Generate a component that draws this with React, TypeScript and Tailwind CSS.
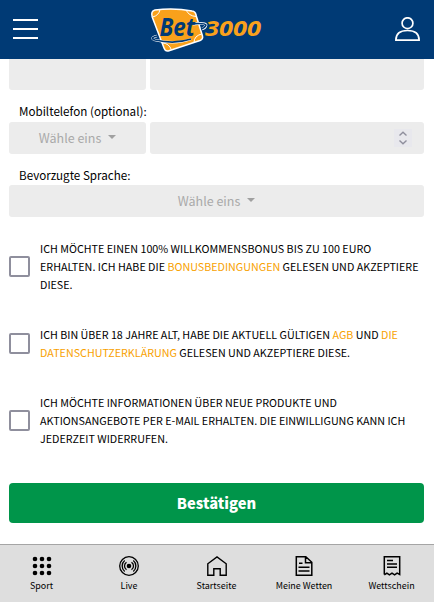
import type { ReactNode } from 'react';

function Logo() {
  return (
    <svg width="114" height="47" viewBox="0 0 114 47" className="ml-[112px] mr-auto block">
      <path
        d="M5 4 Q24 1.500 42 5 Q45.500 5.500 46 9 L52.500 30 Q53.300 33 50 34.500 L19 44.800 Q15.500 46 14 42 L2.200 11 Q.5 5 5 4Z"
        fill="#f9a11b"
        stroke="#fff"
        strokeWidth="1.500"
      />
      <g fill="none" stroke="#fff" strokeWidth="1">
        <path d="M10 3.500Q9 9.500 2.500 11" />
        <path d="M36 4Q39 10 46 10.500" />
        <path d="M51.500 28Q44 30 44 36.500" />
        <path d="M12 37Q19 37 21.500 44" />
      </g>
      <path d="M7 30Q-1 32 5 34Q25 39 41 33" fill="none" stroke="#fff" strokeWidth="2.400" />
      <path d="M7 30Q-1 32 5 34Q25 38.500 41 33" fill="none" stroke="#003a75" strokeWidth="1.700" />
      <path d="M43 18Q55 16.500 56 19Q55.500 22 52 23" fill="none" stroke="#fff" strokeWidth="2.800" />
      <path d="M39 18Q55 16.500 56 19Q55 22 51 23" fill="none" stroke="#003a75" strokeWidth="1.600" />
      <text
        x="9.500"
        y="30"
        textLength="35.500"
        lengthAdjust="spacingAndGlyphs"
        className="fill-[#003a75] font-['Open_Sans',sans-serif] text-[25px] font-bold italic"
      >
        Bet
      </text>
      <text
        x="55"
        y="30"
        textLength="56"
        lengthAdjust="spacingAndGlyphs"
        className="fill-[#f9a11b] font-['Open_Sans',sans-serif] text-[22px] font-bold italic"
      >
        3000
      </text>
    </svg>
  );
}

function Header() {
  return (
    <header className="flex h-[59px] shrink-0 items-center bg-[#003a75] pl-[13px] pr-[14px]">
      <button aria-label="Menü" className="-mt-px flex w-[25px] flex-col gap-[7px]">
        <span className="h-0.5 bg-white" />
        <span className="h-0.5 bg-white" />
        <span className="h-0.5 bg-white" />
      </button>
      <Logo />
      <button aria-label="Konto" className="-mt-px">
        <svg width="25" height="24" viewBox="0 0 25 24" fill="none" stroke="#fff" strokeWidth="1.700">
          <circle cx="12.500" cy="6.200" r="5.400" />
          <path d="M.9 23.100C.9 17 5 13.500 12.500 13.500S24.100 17 24.100 23.100Z" />
        </svg>
      </button>
    </header>
  );
}

function Select({ className }: { className: string }) {
  return (
    <button
      className={`flex h-8 items-center justify-center gap-[7px] rounded-[3px] bg-[#ececec] text-[12.500px] text-[#a9a9a9] ${className}`}
    >
      <span>Wähle eins</span>
      <span className="-mt-[3px] border-x-4 border-t-4 border-x-transparent border-t-[#a0a0a0]" />
    </button>
  );
}

function Stepper() {
  return (
    <svg width="18" height="18" viewBox="0 0 18 18" className="bg-[#e8e8ed]">
      <path d="M5.500 6.500 9 3.200l3.500 3.300M5.500 11.500 9 14.800l3.500-3.300" fill="none" stroke="#8f8f9d" strokeWidth="1.400" />
    </svg>
  );
}

function Consent({ children, className }: { children: ReactNode; className: string }) {
  return (
    <label className={`flex items-center gap-[10px] ${className}`}>
      <span className="mb-0.5 size-[21px] shrink-0 rounded-[2px] border-2 border-[#8f8f9d] bg-white" />
      <span className="whitespace-nowrap text-[10.740px] leading-[18px] text-black">{children}</span>
    </label>
  );
}

function Orange({ children }: { children: ReactNode }) {
  return <a className="text-[#f8a100]">{children}</a>;
}

const icons = {
  sport: (
    <g fill="#000">
      {[3, 10, 17].map((y) => [3, 10, 17].map((x) => <circle key={`${x}-${y}`} cx={x} cy={y} r="2.300" />))}
    </g>
  ),
  live: (
    <g fill="none" stroke="#000" strokeWidth="1.300">
      <circle cx="10" cy="10" r="9.300" />
      <circle cx="10" cy="10" r="2.300" fill="#000" stroke="none" />
      <path d="M7.500 6.200a4.600 4.600 0 0 0 0 7.600M12.500 6.200a4.600 4.600 0 0 1 0 7.600M5.700 4.600a7 7 0 0 0 0 10.800M14.300 4.600a7 7 0 0 1 0 10.800" />
    </g>
  ),
  home: <path d="M.8 19.300V7.800L10 .9l9.200 6.900v11.500h-6v-6.500H6.800v6.500Z" fill="none" stroke="#000" strokeWidth="1.400" />,
  bets: (
    <g fill="none" stroke="#000" strokeWidth="1.500">
      <path d="M2.300.8h9.500l6 5.500v13H2.300ZM11.500.8v6h6M5 7.300h3.500M4.500 11.300h11M4.500 15h11" />
    </g>
  ),
  slip: (
    <g fill="none" stroke="#000" strokeWidth="1.500">
      <path d="M2.300 18.500V.8h15.400v17.700l-2.600-1.300-2.500 1.700-2.600-1.700-2.600 1.700-2.500-1.700-2.600 1.700M5 4.600h6M5 7.900h10M5 11.200h10" />
    </g>
  ),
};

const nav = [
  { label: 'Sport', icon: icons.sport, width: 'w-[83px]' },
  { label: 'Live', icon: icons.live, width: 'w-[92px]' },
  { label: 'Startseite', icon: icons.home, width: 'w-[83px]' },
  { label: 'Meine Wetten', icon: icons.bets, width: 'w-[92px]' },
  { label: 'Wettschein', icon: icons.slip, width: 'w-[83px]' },
];

function BottomNav() {
  return (
    <nav className="flex h-[58px] shrink-0 border-t border-[#a5a5a5] bg-[#dedede]">
      {nav.map((item) => (
        <a key={item.label} className={`flex flex-col items-center pt-[11px] ${item.width}`}>
          <svg width="20" height="20" viewBox="0 0 20 20">
            {item.icon}
          </svg>
          <span className="mt-0.5 whitespace-nowrap text-[8.950px] leading-4 text-black">{item.label}</span>
        </a>
      ))}
    </nav>
  );
}

export default function App() {
  return (
    <div className="flex h-[602px] w-[434px] flex-col overflow-hidden bg-white font-['Noto_Sans_CJK_SC',sans-serif]">
      <Header />
      <main className="flex flex-1 flex-col pl-[9px] pr-[10px]">
        <div className="flex gap-1">
          <div className="h-[31px] w-[137px] rounded-b-[3px] bg-[#ececec]" />
          <div className="h-[31px] flex-1 rounded-b-[3px] bg-[#ececec]" />
        </div>
        <div className="mt-[11px] h-[21px] pl-[10px] text-[11.630px] leading-5 text-black">Mobiltelefon (optional):</div>
        <div className="flex gap-1">
          <Select className="w-[137px]" />
          <div className="flex h-8 flex-1 items-center justify-end rounded-[3px] bg-[#ececec] pr-3">
            <Stepper />
          </div>
        </div>
        <div className="mt-[11px] h-5 pl-[10px] text-[11.630px] leading-5 text-black">Bevorzugte Sprache:</div>
        <Select className="w-full" />
        <Consent className="mt-[23px]">
          ICH MÖCHTE EINEN 100% WILLKOMMENSBONUS BIS ZU 100 EURO
          <br />
          ERHALTEN. ICH HABE DIE <Orange>BONUSBEDINGUNGEN</Orange> GELESEN UND AKZEPTIERE
          <br />
          DIESE.
        </Consent>
        <Consent className="mt-8">
          ICH BIN ÜBER 18 JAHRE ALT, HABE DIE AKTUELL GÜLTIGEN <Orange>AGB</Orange> UND <Orange>DIE</Orange>
          <br />
          <Orange>DATENSCHUTZERKLÄRUNG</Orange> GELESEN UND AKZEPTIERE DIESE.
        </Consent>
        <Consent className="mt-8">
          ICH MÖCHTE INFORMATIONEN ÜBER NEUE PRODUKTE UND
          <br />
          AKTIONSANGEBOTE PER E-MAIL ERHALTEN. DIE EINWILLIGUNG KANN ICH
          <br />
          JEDERZEIT WIDERRUFEN.
        </Consent>
        <button className="mt-[35px] h-10 rounded-[4px] bg-[#00954a] text-[14.700px] font-black text-white">Bestätigen</button>
      </main>
      <BottomNav />
    </div>
  );
}
